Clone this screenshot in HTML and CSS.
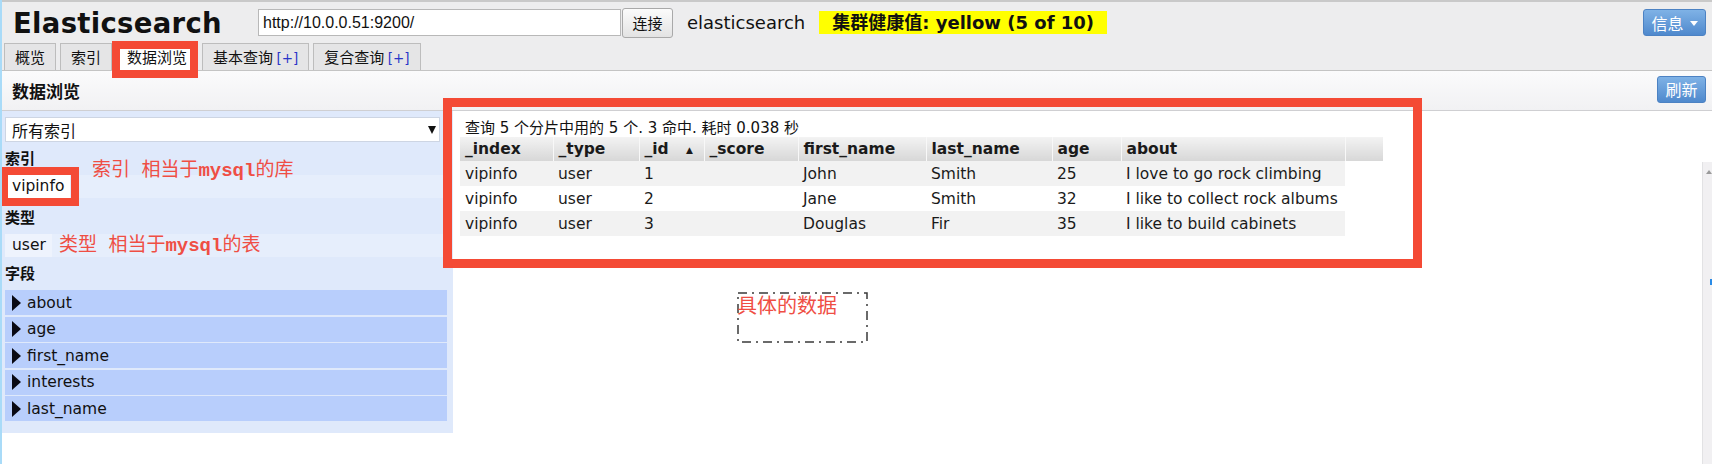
FILE: index.html
```html
<!DOCTYPE html>
<html lang="zh">
<head>
<meta charset="utf-8">
<title>Elasticsearch</title>
<link rel="stylesheet" href="styles.css">
</head>
<body>
<div class="page">
  <header class="header">
    <div class="toprow">
      <h1 class="title">Elasticsearch</h1>
      <input class="uri" type="text" value="http://10.0.0.51:9200/">
      <button class="connect">连接</button>
      <span class="cluster">elasticsearch</span>
      <span class="health">集群健康值: yellow (5 of 10)</span>
      <button class="btn-blue info">信息 <span class="caret"></span></button>
    </div>
    <nav class="tabs">
      <span class="tab">概览</span>
      <span class="tab">索引</span>
      <span class="tab active">数据浏览</span>
      <span class="tab">基本查询 <span class="plus">[+]</span></span>
      <span class="tab">复合查询 <span class="plus">[+]</span></span>
    </nav>
  </header>

  <div class="subbar">
    <span class="subbar-title">数据浏览</span>
    <button class="btn-blue refresh">刷新</button>
  </div>

  <div class="body">
    <aside class="sidebar">
      <div class="select"><span>所有索引</span><span class="select-arrow"></span></div>
      <div class="label">索引</div>
      <div class="item-row"><span class="item marked">vipinfo</span></div>
      <div class="label label-type">类型</div>
      <div class="item-row"><span class="item plain">user</span></div>
      <div class="label">字段</div>
      <div class="fields">
        <div class="field">about</div>
        <div class="field">age</div>
        <div class="field">first_name</div>
        <div class="field">interests</div>
        <div class="field">last_name</div>
      </div>
      <div class="note note-index">索引 相当于<span class="mono">mysql</span>的库</div>
      <div class="note note-type">类型 相当于<span class="mono">mysql</span>的表</div>
    </aside>

    <main class="results">
      <div class="summary">查询 5 个分片中用的 5 个. 3 命中. 耗时 0.038 秒</div>
      <table class="grid">
        <thead>
          <tr>
            <th>_index</th><th>_type</th><th>_id <span class="sort">▲</span></th><th>_score</th><th>first_name</th><th>last_name</th><th>age</th><th>about</th><th class="filler"></th>
          </tr>
        </thead>
        <tbody>
          <tr class="odd"><td>vipinfo</td><td>user</td><td>1</td><td></td><td>John</td><td>Smith</td><td>25</td><td>I love to go rock climbing</td><td class="filler"></td></tr>
          <tr><td>vipinfo</td><td>user</td><td>2</td><td></td><td>Jane</td><td>Smith</td><td>32</td><td>I like to collect rock albums</td><td class="filler"></td></tr>
          <tr class="odd"><td>vipinfo</td><td>user</td><td>3</td><td></td><td>Douglas</td><td>Fir</td><td>35</td><td>I like to build cabinets</td><td class="filler"></td></tr>
        </tbody>
      </table>
      <div class="annot-box"></div>
      <div class="annot-dashed">
        <svg class="dash-frame" width="131" height="51" viewBox="0 0 131 51">
          <rect x="1" y="1" width="129" height="49" fill="none" stroke="#3a3a3a" stroke-width="1.5" stroke-dasharray="9 5 2 5"/>
        </svg>
        <span class="dash-text">具体的数据</span>
      </div>
      <div class="scrolltrack"><span class="scroll-up"></span><span class="scroll-mark"></span></div>
    </main>
  </div>
</div>
</body>
</html>
```

FILE: styles.css
```css
* { box-sizing: border-box; }

html, body {
  margin: 0;
  padding: 0;
}

body {
  width: 1712px;
  height: 464px;
  overflow: hidden;
  background: #ffffff;
  color: #111;
  font-family: "DejaVu Sans", "Noto Sans CJK SC", sans-serif;
}

.page {
  position: relative;
  height: 464px;
}

.page::before {
  content: "";
  position: absolute;
  left: 0;
  top: 0;
  bottom: 0;
  width: 2px;
  background: #a9dbf8;
  z-index: 10;
}

/* ---------- header ---------- */
.header {
  height: 71px;
  background: #ededee;
  border-top: 2px solid #c9c9c9;
  border-bottom: 1px solid #c4c4c4;
  display: flex;
  flex-direction: column;
}

.toprow {
  height: 41px;
  display: flex;
  align-items: center;
  padding: 0 6px 0 13px;
}

.title {
  margin: 0;
  font-family: "DejaVu Sans", sans-serif;
  font-size: 27.5px;
  font-weight: bold;
  letter-spacing: 0.3px;
  line-height: 30px;
  color: #111;
  width: 212px;
  white-space: nowrap;
}

.uri {
  margin-left: 33px;
  width: 363px;
  height: 27px;
  border: 1px solid #b8b8b8;
  background: #fff;
  padding: 0 4px;
  font-family: "Liberation Sans", sans-serif;
  font-size: 16px;
  color: #111;
}

.connect {
  margin-left: 1px;
  width: 51px;
  height: 30px;
  padding: 0;
  border: 1px solid #a9a9a9;
  border-radius: 3px;
  background: linear-gradient(#fbfbfb, #e3e3e3);
  font-family: "Noto Sans CJK SC", sans-serif;
  font-size: 15px;
  color: #111;
}

.cluster {
  margin-left: 14px;
  font-size: 18px;
  color: #111;
}

.health {
  margin-left: 14px;
  height: 23px;
  line-height: 23px;
  padding: 0 13px;
  background: #ffff00;
  font-size: 18px;
  font-weight: bold;
  color: #111;
}

.btn-blue {
  border: 1px solid #4c82c3;
  border-radius: 3px;
  background: linear-gradient(#7fb2e6, #4f89cd);
  color: #fff;
  font-family: "Noto Sans CJK SC", sans-serif;
  font-size: 16px;
  padding: 0;
  display: flex;
  align-items: center;
  justify-content: center;
}

.info {
  margin-left: auto;
  width: 63px;
  height: 27px;
  gap: 6px;
}

.caret {
  width: 0;
  height: 0;
  border-left: 4px solid transparent;
  border-right: 4px solid transparent;
  border-top: 5px solid #fff;
  margin-top: 2px;
}

/* ---------- tabs ---------- */
.tabs {
  height: 27px;
  display: flex;
  align-items: flex-end;
  gap: 4px;
  padding-left: 4px;
}

.tab {
  height: 27px;
  padding: 0 10px;
  border: 1px solid #bdbdbd;
  border-bottom: none;
  background: #e5e5e6;
  font-family: "Noto Sans CJK SC", sans-serif;
  font-size: 15px;
  line-height: 26px;
  color: #111;
  white-space: nowrap;
}

.tab .plus {
  color: #2a35c8;
  font-family: "DejaVu Sans", sans-serif;
  font-size: 13.5px;
}

.tab.active {
  position: relative;
  background: #ffffff;
}

.tab.active::after {
  content: "";
  position: absolute;
  left: -5px;
  right: -1px;
  top: -3px;
  bottom: -8px;
  border: 8px solid #f44a35;
  z-index: 5;
}

/* ---------- sub bar ---------- */
.subbar {
  height: 40px;
  border-bottom: 1px solid #cfcfd2;
  background: linear-gradient(#fbfbfc, #f1f1f3);
  display: flex;
  align-items: center;
  justify-content: space-between;
  padding: 0 6px 0 12px;
}

.subbar-title {
  font-family: "Noto Sans CJK SC", sans-serif;
  font-size: 17px;
  font-weight: bold;
  color: #111;
}

.refresh {
  width: 49px;
  height: 27px;
  margin-top: -3px;
}

/* ---------- body ---------- */
.body {
  display: flex;
  height: 353px;
}

.sidebar {
  position: relative;
  flex-shrink: 0;
  width: 453px;
  height: 322px;
  background: #dfe9fb;
  padding: 6px 6px 12px 5px;
}

.select {
  width: 435px;
  height: 25px;
  background: #fff;
  border: 1px solid #cdd5e3;
  display: flex;
  align-items: center;
  justify-content: space-between;
  padding: 0 3px 0 6px;
  font-family: "Noto Sans CJK SC", sans-serif;
  font-size: 16px;
  color: #111;
}

.select-arrow {
  width: 0;
  height: 0;
  border-left: 4px solid transparent;
  border-right: 4px solid transparent;
  border-top: 8px solid #111;
}

.label {
  margin-top: 7px;
  font-family: "Noto Sans CJK SC", sans-serif;
  font-size: 15px;
  font-weight: bold;
  line-height: 18px;
  color: #111;
}

.label-type {
  margin-top: 10px;
}

.item-row {
  margin-top: 8px;
  height: 23px;
  display: flex;
  align-items: center;
  background: rgba(255, 255, 255, 0.22);
}

.item {
  height: 23px;
  line-height: 23px;
  padding: 0 6px;
  font-size: 15.5px;
  color: #111;
}

.item.marked {
  position: relative;
  margin-left: 1px;
  background: #ffffff;
}

.item.marked::after {
  content: "";
  position: absolute;
  left: -6px;
  right: -9px;
  top: -8px;
  bottom: -8px;
  border: 8px solid #f44a35;
}

.item.plain {
  padding-left: 7px;
  background: #eef3fd;
}

.fields {
  margin-top: 8px;
  display: flex;
  flex-direction: column;
  gap: 1.5px;
}

.field {
  height: 25px;
  background: #b8cefc;
  display: flex;
  align-items: center;
  padding-left: 7px;
  font-size: 15.5px;
  color: #111;
}

.field::before {
  content: "";
  width: 0;
  height: 0;
  border-left: 9px solid #0a0a14;
  border-top: 8px solid transparent;
  border-bottom: 8px solid transparent;
  margin-right: 6px;
}

.note {
  position: absolute;
  font-family: "Liberation Mono", "Noto Sans CJK SC", monospace;
  font-size: 19px;
  line-height: 19px;
  color: #ef4e44;
  white-space: nowrap;
}

.note .mono {
  font-family: "Liberation Mono", monospace;
  font-weight: bold;
}

.note-index {
  left: 92px;
  top: 51px;
}

.note-type {
  left: 59px;
  top: 126px;
}

/* ---------- results ---------- */
.results {
  position: relative;
  flex: 1;
  padding: 8px 0 0 7px;
}

.summary {
  padding-left: 5px;
  font-size: 15px;
  line-height: 18px;
  color: #111;
}

.grid {
  border-collapse: collapse;
  table-layout: fixed;
  width: 923px;
  font-size: 15.5px;
  color: #1a1a1a;
}

.grid th {
  height: 24px;
  padding: 0 0 0 5px;
  text-align: left;
  font-weight: bold;
  background: linear-gradient(#f3f3f3, #d7d7d7);
  border-left: 1px solid #f8f8f8;
  white-space: nowrap;
}

.grid th:first-child { border-left: none; }

.grid th:nth-child(1) { width: 93px; }
.grid th:nth-child(2) { width: 86px; }
.grid th:nth-child(3) { width: 65px; }
.grid th:nth-child(4) { width: 94px; }
.grid th:nth-child(5) { width: 128px; }
.grid th:nth-child(6) { width: 126px; }
.grid th:nth-child(7) { width: 69px; }
.grid th:nth-child(8) { width: 224px; }
.grid th:nth-child(9) { width: 38px; }

.sort {
  font-size: 9px;
  margin-left: 12px;
  vertical-align: 1px;
}

.grid td {
  height: 25px;
  padding: 0 0 0 5px;
  white-space: nowrap;
  overflow: hidden;
}

.grid tr.odd td { background: #f2f2f2; }
.grid tr td.filler { background: transparent; }

.annot-box {
  position: absolute;
  left: -10px;
  top: -13px;
  width: 979px;
  height: 170px;
  border: 9px solid #f44a35;
}

.annot-dashed {
  position: absolute;
  left: 284px;
  top: 181px;
  width: 131px;
  height: 51px;
}

.dash-frame {
  display: block;
}

.dash-text {
  position: absolute;
  left: 0;
  top: 3px;
  font-family: "Noto Sans CJK SC", sans-serif;
  font-size: 20px;
  line-height: 20px;
  color: #ef4e44;
}

.scrolltrack {
  position: absolute;
  right: 0;
  top: 51px;
  bottom: 0;
  width: 10px;
  background: #f1f0f2;
  border-left: 1px solid #e2e2e4;
}

.scroll-up {
  position: absolute;
  left: 3px;
  top: 8px;
  width: 0;
  height: 0;
  border-left: 3px solid transparent;
  border-right: 3px solid transparent;
  border-bottom: 4px solid #9a9a9a;
}

.scroll-mark {
  position: absolute;
  right: 0;
  top: 117px;
  width: 2px;
  height: 6px;
  background: #2a8be6;
}
```
